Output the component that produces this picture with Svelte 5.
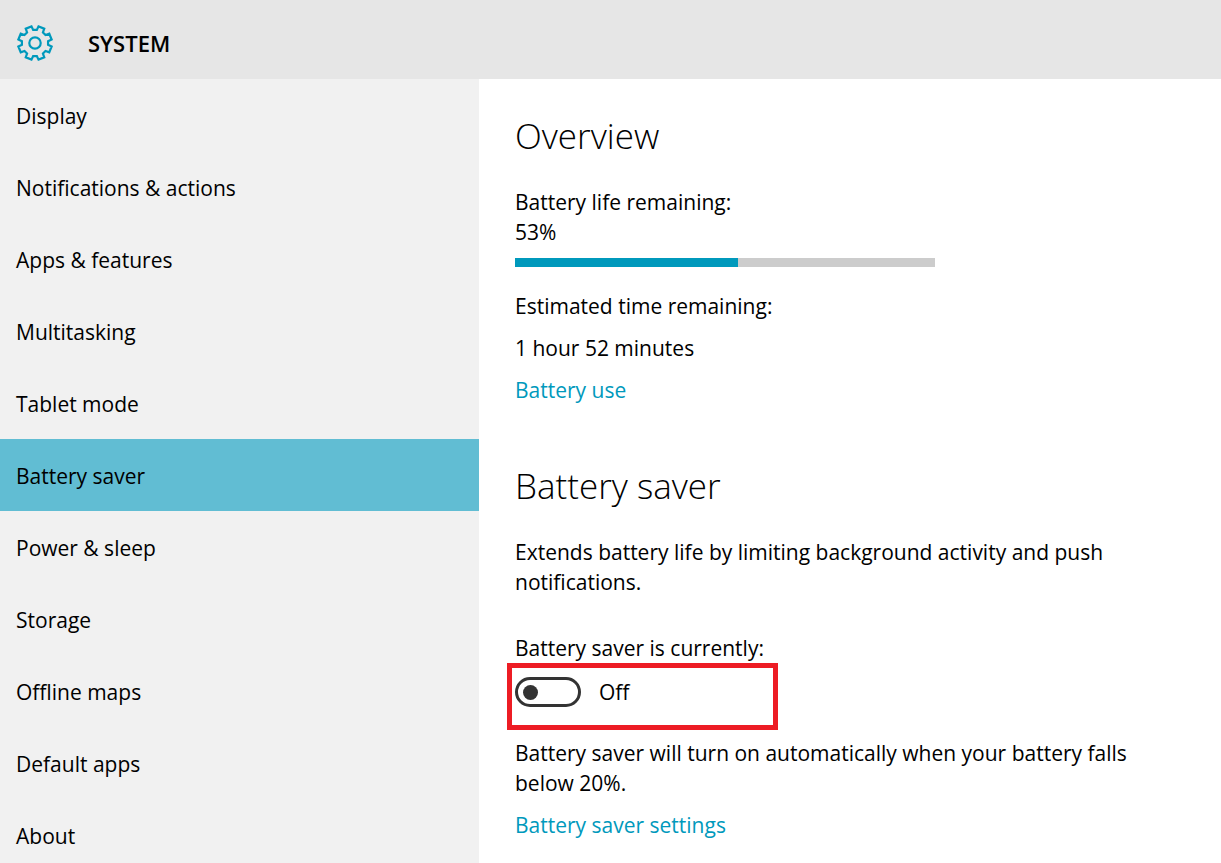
<script>
	let pages = [
		"Display",
		"Notifications & actions",
		"Apps & features",
		"Multitasking",
		"Tablet mode",
		"Battery saver",
		"Power & sleep",
		"Storage",
		"Offline maps",
		"Default apps",
		"About",
	]

	let current = "Battery saver"
	let charge = 53
	let saverOn = false

	// outline of a gear with eight teeth around 0,0
	function gearPath() {
		const corners = [[-8, 13.2], [8, 13.2], [12, 17], [33, 17]]
		let points = []
		for (let i = 0; i < 8; i++) {
			for (const [angle, r] of corners) {
				const a = ((i * 45 + angle) * Math.PI) / 180
				points.push(`${(r * Math.sin(a)).toFixed(2)} ${(-r * Math.cos(a)).toFixed(2)}`)
			}
		}
		return "M" + points.join("L") + "Z"
	}
</script>

<div class="window">
	<header>
		<svg viewBox="-20 -20 40 40" width="40" height="40" aria-hidden="true">
			<path d={gearPath()} />
			<circle r="5.7" />
		</svg>
		<h1>SYSTEM</h1>
	</header>

	<div class="columns">
		<nav>
			{#each pages as page}
				<button class:active={page == current} on:click={() => (current = page)}>{page}</button>
			{/each}
		</nav>

		<main>
			<section>
				<h2>Overview</h2>
				<p id="chargeLabel">Battery life remaining:</p>
				<p>{charge}%</p>
				<div
					class="bar"
					role="progressbar"
					aria-labelledby="chargeLabel"
					aria-valuenow={charge}
					aria-valuemin="0"
					aria-valuemax="100"
				>
					<div class="fill" style="width: {charge}%"></div>
				</div>
				<p>Estimated time remaining:</p>
				<p class="spaced">1 hour 52 minutes</p>
				<a href="#usage">Battery use</a>
			</section>

			<section>
				<h2>Battery saver</h2>
				<p>Extends battery life by limiting background activity and push notifications.</p>
				<label class="saver" for="saverToggle">Battery saver is currently:</label>
				<div class="marked">
					<input type="checkbox" id="saverToggle" bind:checked={saverOn} />
					<span>{saverOn ? "On" : "Off"}</span>
				</div>
				<p class="auto">Battery saver will turn on automatically when your battery falls below 20%.</p>
				<a href="#settings">Battery saver settings</a>
			</section>
		</main>
	</div>
</div>

<style>
	:global(body) {
		margin: 0;
	}

	.window {
		height: 100vh;
		display: flex;
		flex-direction: column;
		background: #fff;
		color: #000;
		font-family: "Open Sans", "Noto Sans", sans-serif;
		font-size: 21px;
		line-height: 30px;
	}

	header {
		flex: none;
		display: flex;
		align-items: center;
		gap: 33px;
		padding: 23px 15px 16px;
		background: #e6e6e6;
	}

	header svg {
		fill: none;
		stroke: #0099bc;
		stroke-width: 2.2;
	}

	h1 {
		margin: 0;
		font-size: 22px;
		line-height: 28px;
		font-weight: 600;
	}

	.columns {
		flex: 1;
		min-height: 0;
		display: grid;
		grid-template-columns: minmax(240px, 479px) 1fr;
	}

	nav,
	main {
		overflow-y: auto;
		scrollbar-width: none;
	}

	nav {
		background: #f1f1f1;
	}

	nav button {
		display: block;
		width: 100%;
		padding: 22px 16px 20px;
		border: 0;
		background: none;
		color: inherit;
		font: inherit;
		text-align: left;
		cursor: pointer;
	}

	nav button:hover {
		background: #dedede;
	}

	nav button.active {
		background: #61bdd3;
	}

	main {
		padding: 33px 36px 22px;
	}

	section + section {
		margin-top: 57px;
	}

	h2 {
		margin: 0 0 27px;
		font-size: 35px;
		line-height: 48px;
		font-weight: 300;
	}

	p {
		margin: 0;
	}

	.bar {
		max-width: 420px;
		height: 9px;
		margin: 11px 0 24px;
		background: #ccc;
	}

	.fill {
		height: 100%;
		background: #0099bc;
	}

	.spaced {
		margin: 12px 0;
	}

	a {
		color: #0099bc;
		text-decoration: none;
	}

	a:hover {
		color: #666;
	}

	.saver {
		display: block;
		margin-top: 36px;
	}

	.marked {
		display: flex;
		align-items: center;
		gap: 18px;
		box-sizing: border-box;
		max-width: 271px;
		margin: 0 0 8px -8px;
		padding: 9px 3px 18px;
		border: 5px solid #ed1c24;
	}

	#saverToggle {
		appearance: none;
		box-sizing: border-box;
		display: flex;
		align-items: center;
		width: 66px;
		height: 30px;
		margin: 0;
		padding: 0 5px;
		border: 3px solid #333;
		border-radius: 15px;
		cursor: pointer;
	}

	#saverToggle::before {
		content: "";
		width: 15px;
		height: 15px;
		border-radius: 50%;
		background: #333;
	}

	#saverToggle:checked {
		justify-content: flex-end;
		border-color: #0099bc;
		background: #0099bc;
	}

	#saverToggle:checked::before {
		background: #fff;
	}

	.auto {
		margin-bottom: 12px;
	}
</style>
